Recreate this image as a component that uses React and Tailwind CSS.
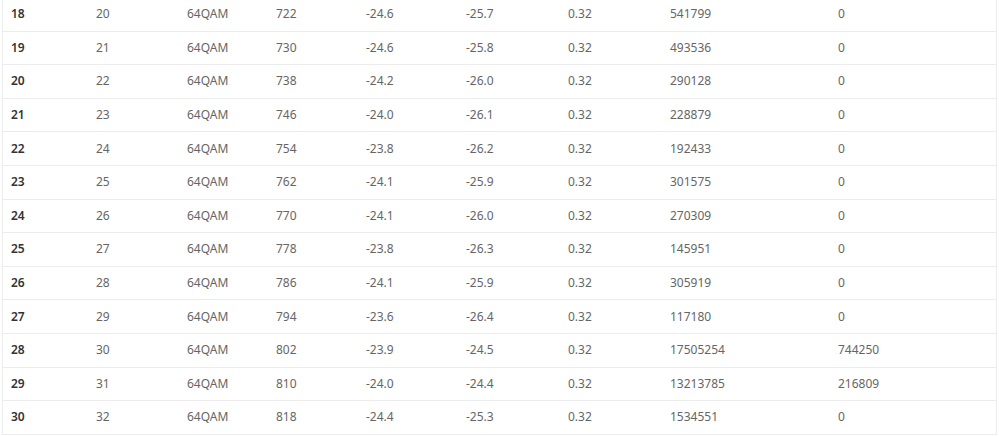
const rows = [
  ['18', '20', '64QAM', '722', '-24.6', '-25.7', '0.32', '541799', '0'],
  ['19', '21', '64QAM', '730', '-24.6', '-25.8', '0.32', '493536', '0'],
  ['20', '22', '64QAM', '738', '-24.2', '-26.0', '0.32', '290128', '0'],
  ['21', '23', '64QAM', '746', '-24.0', '-26.1', '0.32', '228879', '0'],
  ['22', '24', '64QAM', '754', '-23.8', '-26.2', '0.32', '192433', '0'],
  ['23', '25', '64QAM', '762', '-24.1', '-25.9', '0.32', '301575', '0'],
  ['24', '26', '64QAM', '770', '-24.1', '-26.0', '0.32', '270309', '0'],
  ['25', '27', '64QAM', '778', '-23.8', '-26.3', '0.32', '145951', '0'],
  ['26', '28', '64QAM', '786', '-24.1', '-25.9', '0.32', '305919', '0'],
  ['27', '29', '64QAM', '794', '-23.6', '-26.4', '0.32', '117180', '0'],
  ['28', '30', '64QAM', '802', '-23.9', '-24.5', '0.32', '17505254', '744250'],
  ['29', '31', '64QAM', '810', '-24.0', '-24.4', '0.32', '13213785', '216809'],
  ['30', '32', '64QAM', '818', '-24.4', '-25.3', '0.32', '1534551', '0'],
]

// column widths, px
const cols = [
  'w-[93px]', 'w-[91px]', 'w-[89px]', 'w-[90px]', 'w-[100px]',
  'w-[102px]', 'w-[102px]', 'w-[168px]', 'flex-1',
]

export default function App() {
  return (
    <div className="w-[999px] h-[436px] overflow-hidden bg-white font-['Noto_Sans','Open_Sans',sans-serif] text-[12px]">
      <div className="mt-[-2px] ml-[2px] mr-[2px] border-x border-[#ececec]">
        {rows.map(r => (
          <div key={r[0]} className="flex items-center h-[33.6px] border-b border-[#ececec]">
            {r.map((v, i) => (
              <div
                key={i}
                className={`${cols[i]} shrink-0 ${i === 0 ? 'pl-[8px] font-semibold text-[#333]' : 'text-[#666]'}`}
              >
                {v}
              </div>
            ))}
          </div>
        ))}
      </div>
    </div>
  )
}
